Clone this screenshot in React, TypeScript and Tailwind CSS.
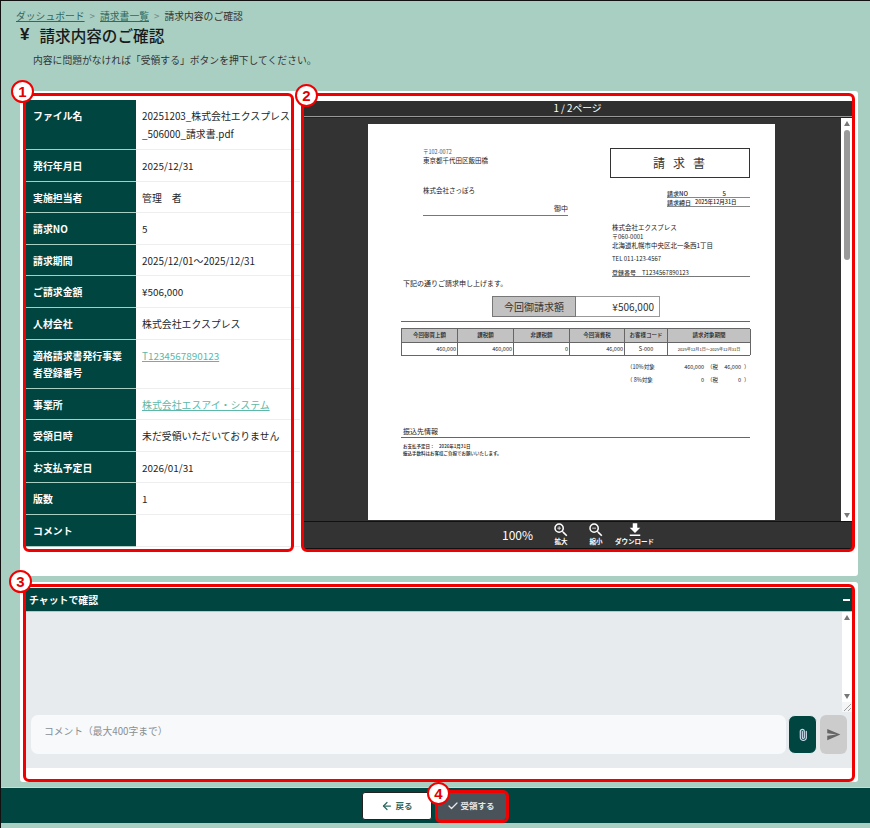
import React from "react";
import { ArrowLeft, Check, Paperclip } from "lucide-react";
import { MdZoomIn, MdZoomOut, MdFileDownload, MdSend } from "react-icons/md";

const rows: { k: string; v: string; h: string; link?: boolean }[] = [
  { k: "ファイル名", v: "20251203_株式会社エクスプレス\n_506000_請求書.pdf", h: "h-[50px]" },
  { k: "発行年月日", v: "2025/12/31", h: "h-[31.6px]" },
  { k: "実施担当者", v: "管理　者", h: "h-[31.6px]" },
  { k: "請求NO", v: "5", h: "h-[31.6px]" },
  { k: "請求期間", v: "2025/12/01～2025/12/31", h: "h-[31.6px]" },
  { k: "ご請求金額", v: "¥506,000", h: "h-[31.6px]" },
  { k: "人材会社", v: "株式会社エクスプレス", h: "h-[31.6px]" },
  { k: "適格請求書発行事業者登録番号", v: "T1234567890123", h: "h-[49px]", link: true },
  { k: "事業所", v: "株式会社エスアイ・システム", h: "h-[31.6px]", link: true },
  { k: "受領日時", v: "未だ受領いただいておりません", h: "h-[31.6px]" },
  { k: "お支払予定日", v: "2026/01/31", h: "h-[31.6px]" },
  { k: "版数", v: "1", h: "h-[31.6px]" },
  { k: "コメント", v: "", h: "h-[31.6px]" },
];

const cols = [
  { w: "w-[56px]", h: "今回御買上額", v: "460,000", r: true },
  { w: "w-[56px]", h: "課税額", v: "460,000", r: true },
  { w: "w-[56px]", h: "非課税額", v: "0", r: true },
  { w: "w-[55px]", h: "今回消費税", v: "46,000", r: true },
  { w: "w-[43px]", h: "お客様コード", v: "S-000", r: false },
  { w: "w-[83px]", h: "請求対象期間", v: "2025年12月1日～2025年12月31日", r: false },
];

function Badge({ n, cls }: { n: number; cls: string }) {
  return (
    <div className={`absolute w-[23px] h-[23px] rounded-full bg-white border-[2.5px] border-[#f00000] flex items-center justify-center text-[15px] font-bold text-[#e00000] font-['Liberation_Sans',sans-serif] leading-none ${cls}`}>
      {n}
    </div>
  );
}

function Outline({ cls }: { cls: string }) {
  return <div className={`absolute border-[3px] border-[#f00000] rounded-[6px] pointer-events-none ${cls}`} />;
}

function DocPage() {
  return (
    <div className="w-[407px] h-[396px] shrink-0 mr-px bg-white text-[#222] flex flex-col pt-[24px] pl-[33px] pr-[25px] font-['Noto_Sans_CJK_JP',serif] font-normal overflow-hidden">
      <div className="flex justify-between h-[66px]">
        <div className="pl-[22px] w-[167px]">
          <div className="text-[5.5px] leading-[8px] text-[#555]">〒102-0072</div>
          <div className="text-[6.5px] leading-[9px]">東京都千代田区飯田橋</div>
          <div className="text-[6.5px] leading-[9px] mt-[21px]">株式会社さっぽろ</div>
          <div className="text-[7px] leading-[10px] mt-[8px] text-right border-b border-[#777] pb-[2px]">御中</div>
        </div>
        <div className="w-[140px] flex flex-col items-end">
          <div className="w-[140px] h-[30px] border border-[#333] flex items-center justify-center text-[12px] tracking-[8px] pl-[6px] text-[#333]">請求書</div>
          <div className="w-[83px] mt-[12px] text-[6px] leading-[7px] font-medium">
            <div className="border-b border-[#888] flex justify-between pr-[24px]"><span>請求NO</span><span>5</span></div>
            <div className="border-b border-[#888] flex gap-[4px] whitespace-nowrap mt-[1px]"><span>請求締日</span><span className="text-[5.5px]">2025年12月31日</span></div>
          </div>
        </div>
      </div>
      <div className="flex justify-end h-[63px]">
        <div className="w-[138px] pt-[9px] text-[6.5px] leading-[9px] border-b border-[#777] h-[63px] whitespace-nowrap">
          <div>株式会社エクスプレス</div>
          <div className="text-[6px] leading-[8px] mt-[1px]">〒060-0001</div>
          <div>北海道札幌市中央区北一条西1丁目</div>
          <div className="mt-[4px] text-[6px]">TEL 011-123-4567</div>
          <div className="mt-[5px] text-[6px]">登録番号　T1234567890123</div>
        </div>
      </div>
      <div className="text-[7px] leading-[10px] ml-[2px] mt-[1px]">下記の通りご請求申し上げます。</div>
      <div className="flex ml-[91px] mt-[8px] h-[21px]">
        <div className="w-[84px] bg-[#c2c2c2] border border-[#777] flex items-center justify-center text-[10px] text-[#333]">今回御請求額</div>
        <div className="w-[84px] border border-l-0 border-[#999] flex items-center justify-end pr-[5px] text-[10px] text-[#333]">¥506,000</div>
      </div>
      <div className="border-b border-[#666] mt-[4px]" />
      <div className="flex mt-[6px] border border-[#666] border-r-0 w-[349px]">
        {cols.map((c) => (
          <div key={c.h} className={`${c.w} shrink-0 border-r border-[#666] flex flex-col`}>
            <div className="h-[14px] bg-[#c2c2c2] border-b border-[#666] flex items-center justify-center text-[5.5px] whitespace-nowrap font-medium">{c.h}</div>
            <div className={`h-[12px] flex items-center whitespace-nowrap ${c.r ? "justify-end pr-[1px]" : "justify-center"} ${c.w === "w-[83px]" ? "text-[4.1px]" : "text-[5.5px]"}`}>{c.v}</div>
          </div>
        ))}
      </div>
      <div className="ml-[226px] mt-[5px] text-[5.5px] leading-[13px] whitespace-nowrap">
        <div className="flex"><span className="w-[40px]">（10%対象</span><span className="w-[37px] text-right">460,000</span><span className="ml-[3px] w-[12px]">（税</span><span className="w-[22px] text-right">46,000</span><span className="ml-[3px]">）</span></div>
        <div className="flex"><span className="w-[40px]">（ 8%対象</span><span className="w-[37px] text-right">0</span><span className="ml-[3px] w-[12px]">（税</span><span className="w-[22px] text-right">0</span><span className="ml-[3px]">）</span></div>
      </div>
      <div className="mt-[39px] text-[7px] leading-[10px] pl-[2px] pb-[1px] border-b border-[#666]">振込先情報</div>
      <div className="mt-[4px] pl-[2px] text-[4.5px] leading-[8px] font-medium whitespace-nowrap">お支払予定日：　2026年1月31日</div>
      <div className="pl-[2px] text-[4.5px] leading-[7px] font-medium whitespace-nowrap">振込手数料はお客様ご負担でお願いいたします。</div>
    </div>
  );
}

function Tool({ label, icon, cls }: { label: string; icon: React.ReactNode; cls: string }) {
  return (
    <div className={`flex flex-col items-center text-white -mt-[2px] ${cls}`}>
      <div className="h-[15px] flex items-center">{icon}</div>
      <div className="text-[6.5px] leading-[9px] font-bold whitespace-nowrap">{label}</div>
    </div>
  );
}

export default function App() {
  return (
    <div className="relative w-[870px] h-[828px] overflow-hidden bg-[#a9cfc3] border-l border-t border-[#111] font-['Noto_Sans_CJK_JP',sans-serif] text-[#212529] flex flex-col">
      <header className="pl-[15px] pt-[8px] h-[90px] shrink-0">
        <nav className="text-[9.8px] leading-[14px] flex items-center gap-[5px] text-[#333]">
          <span className="underline text-[#2d6a62]">ダッシュボード</span>
          <span className="text-[#7a8a85]">&gt;</span>
          <span className="underline text-[#2d6a62]">請求書一覧</span>
          <span className="text-[#7a8a85]">&gt;</span>
          <span>請求内容のご確認</span>
        </nav>
        <h1 className="mt-px ml-[4px] text-[15.6px] leading-[22px] font-medium flex items-center gap-[10px] text-[#1a1a1a]">
          <span className="font-['Liberation_Sans',sans-serif] font-bold text-[17px]">¥</span>
          <span>請求内容のご確認</span>
        </h1>
        <p className="mt-[7px] ml-[17px] text-[9.8px] leading-[14px] text-[#333]">内容に問題がなければ「受領する」ボタンを押下してください。</p>
      </header>

      <section className="ml-[19px] w-[838px] h-[485px] shrink-0 bg-white flex gap-[3px] pl-[6px] pt-[9px] rounded-[3px]">
        <div className="w-[274px] h-[447px] text-[9.9px] leading-[17.8px]">
          {rows.map((r) => (
            <div key={r.k} className={`flex ${r.h} border-b border-[#eeeeee]`}>
              <div className="w-[110px] shrink-0 bg-[#004540] border-b border-[#a9cfc3] -mb-px pl-[7px] pr-[12px] pt-[8px] text-white font-bold">{r.k}</div>
              <div className="flex-1 pl-[6px] pt-[8px] whitespace-pre-line">
                {r.link ? <span className="underline text-[#5cb8a8]">{r.v}</span> : r.v}
              </div>
            </div>
          ))}
        </div>
        <div className="w-[549px] h-[448px] mt-px flex flex-col bg-[#333] border-b border-[#111]">
          <div className="h-[16px] shrink-0 bg-[#2f2f2f] border-b border-[#999] text-white text-[9.75px] leading-[15px] text-center">1 / 2ページ</div>
          <div className="flex-1 flex min-h-0 border-t border-[#222]">
            <div className="flex-1 flex justify-center pt-[6px] overflow-hidden">
              <DocPage />
            </div>
            <div className="w-[11px] shrink-0 bg-white flex flex-col items-center justify-between py-[3px] relative">
              <div className="w-0 h-0 border-x-[3.5px] border-x-transparent border-b-[5px] border-b-[#777]" />
              <div className="absolute top-[12px] left-[2.5px] w-[6px] h-[130px] rounded-full bg-[#9a9a9a]" />
              <div className="w-0 h-0 border-x-[3.5px] border-x-transparent border-t-[5px] border-t-[#777]" />
            </div>
          </div>
          <div className="h-[27px] shrink-0 bg-[#333] border-t border-[#111] flex items-center relative">
            <span className="ml-[199px] text-white text-[12px] leading-none">100%</span>
            <Tool cls="ml-[19px]" label="拡大" icon={<MdZoomIn size={18} />} />
            <Tool cls="ml-[17px]" label="縮小" icon={<MdZoomOut size={18} />} />
            <Tool cls="ml-[10px]" label="ダウンロード" icon={<MdFileDownload size={18} />} />
          </div>
        </div>
      </section>

      <section className="ml-[19px] mt-[6px] w-[838px] h-[200px] shrink-0 bg-white pl-[6px] pt-[6px] rounded-[3px]">
        <div className="w-[826px]">
          <div className="h-[24px] bg-[#004540] border-b border-[#a9cfc3] flex items-center justify-between pl-[3px] pr-[2px] pt-px text-white text-[9.9px] font-bold">
            <span>チャットで確認</span>
            <span className="w-[7px] h-[2px] bg-white" />
          </div>
          <div className="h-[156px] bg-[#e8ebee] flex flex-col">
            <div className="h-[100px] flex justify-end shrink-0">
              <div className="w-[10px] flex flex-col">
                <div className="h-[90px] bg-white flex flex-col items-center justify-between py-[3px]">
                  <div className="w-0 h-0 border-x-[3.5px] border-x-transparent border-b-[5px] border-b-[#777]" />
                  <div className="w-0 h-0 border-x-[3.5px] border-x-transparent border-t-[5px] border-t-[#777]" />
                </div>
                <svg className="w-[10px] h-[10px] bg-[#f4f5f6]" viewBox="0 0 10 10" fill="none" stroke="#888" strokeWidth="0.8">
                  <path d="M2 9 L9 2 M6 9 L9 6" />
                </svg>
              </div>
            </div>
            <div className="flex gap-[2px] pl-[5px] mt-[3px]">
              <div className="w-[755px] h-[39px] bg-[#f8f9fa] rounded-[7px] flex items-center pl-[13px] pb-[6px] text-[9.75px] text-[#8a8f93]">コメント（最大400字まで）</div>
              <div className="w-[29px] h-[39px] bg-[#004540] rounded-[7px] border border-[#e8ebee] flex items-center justify-center text-[#c8d8e8]">
                <Paperclip size={12} strokeWidth={2.5} className="-rotate-45" />
              </div>
              <div className="ml-[1px] w-[27px] h-[39px] bg-[#cccccc] rounded-[6px] flex items-center justify-center text-[#666]">
                <MdSend size={15} />
              </div>
            </div>
          </div>
        </div>
      </section>

      <footer className="mt-[5px] h-[36px] shrink-0 bg-[#004540] border-t border-[#c5ded6] flex items-center justify-center gap-[4px] pr-[3px]">
        <button className="w-[70px] h-[28px] bg-white rounded-[3px] border border-[#222] flex items-center justify-center gap-[2px] text-[#2d6a62] text-[8.5px] font-bold">
          <ArrowLeft size={12} strokeWidth={2.5} />
          <span>戻る</span>
        </button>
        <button className="w-[70px] h-[28px] bg-[#4a525a] rounded-[3px] flex items-center justify-center gap-[1px] text-[#e8e8e8] text-[8.5px] font-bold">
          <Check size={12} strokeWidth={2.5} />
          <span>受領する</span>
        </button>
      </footer>

      <Outline cls="left-[22px] top-[92px] w-[271px] h-[459px]" />
      <Outline cls="left-[300px] top-[92px] w-[554px] h-[459px]" />
      <Outline cls="left-[22px] top-[583px] w-[832px] h-[198px]" />
      <Outline cls="left-[434px] top-[789px] w-[74px] h-[33px]" />
      <Badge n={1} cls="left-[10px] top-[79px]" />
      <Badge n={2} cls="left-[294px] top-[83px]" />
      <Badge n={3} cls="left-[8px] top-[569px]" />
      <Badge n={4} cls="left-[426px] top-[781px]" />
    </div>
  );
}
